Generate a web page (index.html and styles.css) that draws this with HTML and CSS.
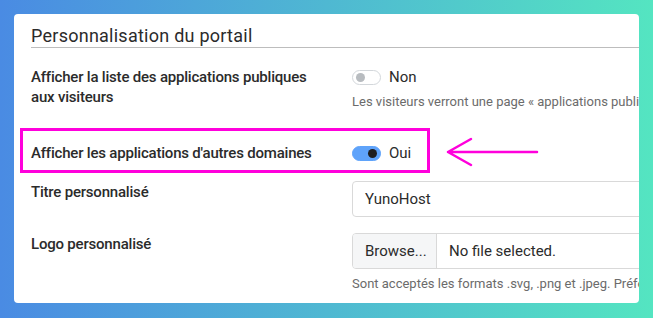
FILE: index.html
```html
<!DOCTYPE html>
<html lang="fr">
<head>
  <meta charset="UTF-8" />
  <meta name="viewport" content="width=device-width, initial-scale=1.0" />
  <title>Personnalisation du portail</title>
  <link rel="stylesheet" href="styles.css">
</head>
<body>

  <!-- Settings card -->
  <div class="card">
    <div class="form">
      <h2 class="section-title">Personnalisation du portail</h2>

      <!-- Public apps list -->
      <div class="form-row">
        <label class="form-label">Afficher la liste des applications publiques aux visiteurs</label>
        <div class="form-field">
          <div class="switch-line">
            <span class="switch"></span>
            <span class="switch-text">Non</span>
          </div>
          <div class="form-help">Les visiteurs verront une page « applications publiques » listant les applications accessibles</div>
        </div>
      </div>

      <!-- Other domains (highlighted) -->
      <div class="form-row form-row-marked">
        <label class="form-label">Afficher les applications d'autres domaines</label>
        <div class="form-field">
          <div class="switch-line">
            <span class="switch switch-on"></span>
            <span class="switch-text">Oui</span>
          </div>
        </div>
      </div>

      <!-- Custom title -->
      <div class="form-row form-row-input">
        <label class="form-label">Titre personnalisé</label>
        <div class="form-field">
          <div class="text-input">YunoHost</div>
        </div>
      </div>

      <!-- Custom logo -->
      <div class="form-row form-row-input">
        <label class="form-label">Logo personnalisé</label>
        <div class="form-field">
          <div class="file-input">
            <span class="file-button">Browse...</span>
            <span class="file-name">No file selected.</span>
          </div>
          <div class="form-help">Sont acceptés les formats .svg, .png et .jpeg. Préférez un logo carré</div>
        </div>
      </div>
    </div>

    <!-- Annotation arrow -->
    <svg class="arrow" width="96" height="32" viewBox="0 0 96 32">
      <path d="M3 17 L92 17 M3 17 L26 4 M3 17 L26 30" fill="none" stroke="#ff00dc" stroke-width="2.5" stroke-linecap="round" stroke-linejoin="round" />
    </svg>
  </div>

</body>
</html>
```

FILE: styles.css
```css
body {
  font-family: Roboto, 'Liberation Sans', sans-serif;
  margin: 0;
  padding: 14px 0 0 14px;
  height: 318px;
  box-sizing: border-box;
  overflow: hidden;
  color: #2b2b2b;
  background: linear-gradient(to right, #4a8be3, #54e5c1);
}

.card {
  position: relative;
  width: 625px;
  height: 289px;
  box-sizing: border-box;
  padding: 11px 0 0 17px;
  background-color: #ffffff;
  border-radius: 4px;
  overflow: hidden;
}

.form {
  width: 780px;
}

.section-title {
  margin: 0;
  font-size: 18px;
  font-weight: 400;
  line-height: 22px;
  letter-spacing: 0.25px;
  color: #2b2b2b;
  border-bottom: 1px solid #bdbdbd;
}

.form-row {
  display: grid;
  grid-template-columns: 290px 1fr;
  column-gap: 31px;
  margin-top: 19px;
}

.form-label {
  font-size: 15px;
  font-weight: 500;
  line-height: 20px;
  letter-spacing: -0.2px;
}

.form-field {
  min-width: 0;
}

.switch-line {
  display: flex;
  align-items: center;
  gap: 8px;
  height: 20px;
}

.switch {
  position: relative;
  width: 29px;
  height: 15px;
  box-sizing: border-box;
  border: 1px solid #d3d7db;
  border-radius: 8px;
  background-color: #ffffff;
}

.switch::after {
  content: "";
  position: absolute;
  top: 2px;
  left: 3px;
  width: 9px;
  height: 9px;
  border-radius: 50%;
  background-color: #b8bcc0;
}

.switch-on {
  border-color: #5fa3fa;
  background-color: #5fa3fa;
}

.switch-on::after {
  left: auto;
  right: 3px;
  background-color: #1e1e1e;
}

.switch-text {
  font-size: 15px;
  color: #2b2b2b;
}

.form-help {
  margin-top: 6px;
  font-size: 13px;
  line-height: 18px;
  color: #6b6b6b;
  white-space: nowrap;
}

/* highlighted row, framed in magenta */
.form-row-marked {
  width: 410px;
  box-sizing: border-box;
  margin: 17px 0 0 -11px;
  padding: 12px 0 7px 8px;
  border: 3px solid #ff00dc;
}

.form-row-marked + .form-row-input {
  margin-top: 8px;
}

.form-row-input {
  margin-top: 16px;
}

.form-row-input .form-label {
  padding-top: 1px;
}

.text-input,
.file-input {
  height: 36px;
  box-sizing: border-box;
  border: 1px solid #d9d9d9;
  border-radius: 4px;
  font-size: 15px;
  line-height: 34px;
  color: #2b2b2b;
}

.text-input {
  padding-left: 12px;
}

.file-input {
  display: flex;
  overflow: hidden;
}

.file-button {
  width: 84px;
  box-sizing: border-box;
  padding-left: 12px;
  background-color: #f5f6f7;
  border-right: 1px solid #d9d9d9;
}

.file-name {
  padding-left: 12px;
}

.arrow {
  position: absolute;
  left: 431px;
  top: 121px;
}
```
